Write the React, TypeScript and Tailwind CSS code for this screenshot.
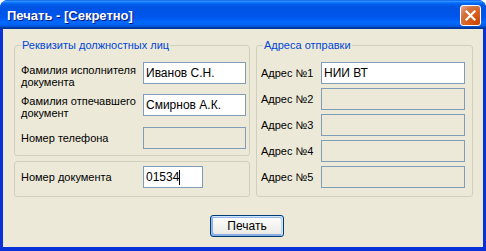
import React from 'react';

/* Диалог печати в стиле Windows XP (Luna) */

const FONT = "font-['Liberation_Sans',Arial,sans-serif]";

function Field({ value, width, caret, disabled }: { value?: string; width: string; caret?: boolean; disabled?: boolean }) {
  return (
    <div
      className={`${width} h-[22px] shrink-0 flex items-center border border-[#7f9db9] px-[2px] text-[12px] text-black ${
        disabled ? 'bg-[#ece9d8]' : 'bg-white'
      }`}
    >
      <span>{value}</span>
      {caret && <span className="w-px h-[15px] bg-black" />}
    </div>
  );
}

function TitleBar() {
  return (
    <div className="h-[29px] shrink-0 flex items-center justify-between rounded-t-[8px] bg-[linear-gradient(to_bottom,#0058ee_0%,#3593ff_4%,#288eff_6%,#127dff_8%,#036ffc_10%,#0262ee_14%,#0057e5_20%,#0054e3_24%,#0055eb_56%,#005bf5_66%,#026afe_76%,#0062ef_86%,#0052d6_92%,#0040ab_94%,#003092_100%)]">
      <span className="pl-[7px] pt-[3px] text-[13px] font-bold text-white [text-shadow:1px_1px_#0a1883]">
        Печать - [Секретно]
      </span>
      <button
        type="button"
        className="mr-[5px] mt-[2px] w-[21px] h-[21px] flex items-center justify-center rounded-[3px] border border-white bg-[radial-gradient(circle_at_90%_90%,#cc4600_0%,#dc6527_55%,#cd7546_70%,#e4967a_90%,#f0b89c_100%)]"
        aria-label="Закрыть"
      >
        <svg width="11" height="11" viewBox="0 0 11 11">
          <path d="M1.5 1.5 L9.5 9.5 M9.5 1.5 L1.5 9.5" stroke="white" strokeWidth="2.2" strokeLinecap="square" />
        </svg>
      </button>
    </div>
  );
}

export default function App() {
  const addresses = ['НИИ ВТ', '', '', '', ''];

  return (
    <div className={`w-[486px] h-[251px] flex flex-col bg-[#0831d9] rounded-t-[8px] ${FONT}`}>
      <TitleBar />

      <div className="flex-1 mx-[3px] mb-[4px] bg-[#ece9d8] text-[11px] text-black">
        <div className="flex gap-[6px] pl-[11px] pt-[10px]">
          {/* Левая колонка */}
          <div className="w-[236px] flex flex-col gap-[5px]">
            <fieldset className="h-[117px] border border-[#d0d0bf] rounded-[3px] pt-[11px]">
              <legend className="ml-[6px] px-[1px] leading-[12px] text-[#0046d5]">Реквизиты должностных лиц</legend>

              <div className="flex items-start h-[32px]">
                <div className="w-[128px] pl-[6px] pt-[2px] leading-[12px]">
                  Фамилия исполнителя
                  <br />
                  документа
                </div>
                <Field value="Иванов С.Н." width="w-[103px]" />
              </div>

              <div className="flex items-start h-[33px]">
                <div className="w-[128px] pl-[6px] pt-[1px] leading-[12px]">
                  Фамилия отпечавшего
                  <br />
                  документ
                </div>
                <Field value="Смирнов А.К." width="w-[103px]" />
              </div>

              <div className="flex items-center">
                <div className="w-[128px] pl-[6px]">Номер телефона</div>
                <Field width="w-[103px]" disabled />
              </div>
            </fieldset>

            <div className="h-[36px] border border-[#d0d0bf] rounded-[3px] pt-[4px] flex items-start">
              <div className="w-[128px] pl-[6px] h-[22px] flex items-center">Номер документа</div>
              <Field value="01534" width="w-[60px]" caret />
            </div>
          </div>

          {/* Правая колонка */}
          <fieldset className="w-[217px] h-[158px] border border-[#d0d0bf] rounded-[3px] pt-[11px]">
            <legend className="ml-[6px] px-[1px] leading-[12px] text-[#0046d5]">Адреса отправки</legend>
            <div className="flex flex-col gap-[4px]">
              {addresses.map((a, i) => (
                <div key={i} className="flex items-center">
                  <div className="w-[64px] pl-[4px]">Адрес №{i + 1}</div>
                  <Field value={a} width="w-[144px]" disabled={!a} />
                </div>
              ))}
            </div>
          </fieldset>
        </div>

        <div className="pl-[207px] pt-[18px]">
          <button
            type="button"
            className="w-[74px] h-[22px] rounded-[3px] border border-[#003c74] bg-[linear-gradient(to_bottom,#ffffff,#ecebe6_86%,#d6d0c5)] shadow-[inset_-1px_1px_#cee7ff,inset_1px_2px_#98b8ea,inset_-2px_2px_#bcd4f6,inset_1px_-1px_#89ade4,inset_2px_-2px_#89ade4] text-[12px] text-black"
          >
            Печать
          </button>
        </div>
      </div>
    </div>
  );
}
